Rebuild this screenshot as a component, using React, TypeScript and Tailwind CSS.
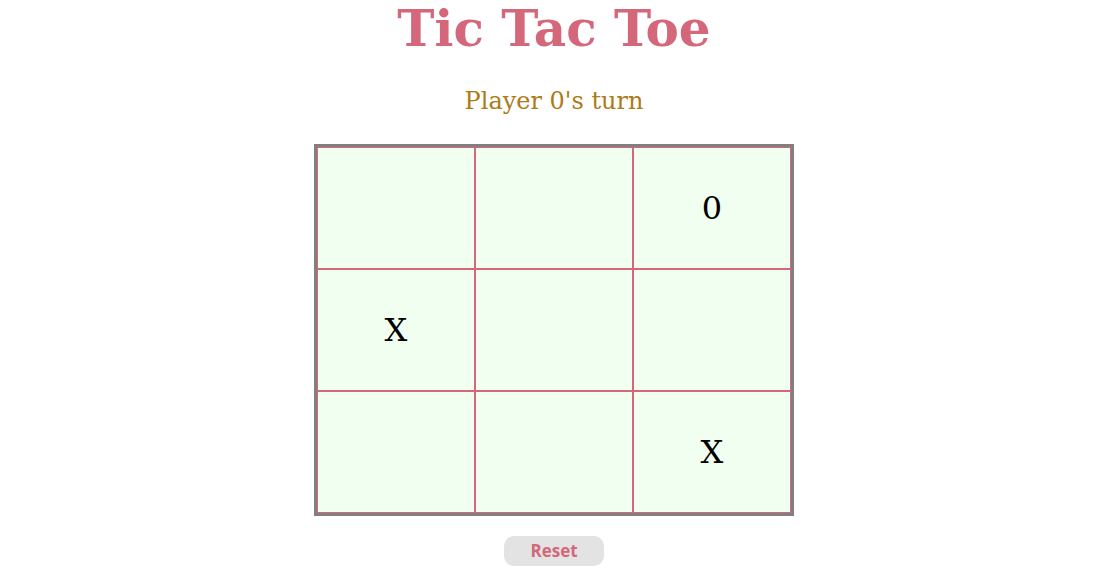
const board = ["", "", "0", "X", "", "", "", "", "X"];

export default function App() {
  return (
    <div className="flex min-h-screen flex-col items-center bg-white pl-[4px]" style={{ fontFamily: '"DejaVu Serif", serif' }}>
      <h1 className="text-[50px] font-bold leading-[58px] text-[#d4677a]">Tic Tac Toe</h1>
      <p className="mt-[29px] text-[24px] leading-[28px] text-[#ad7b16]">Player 0's turn</p>

      <div className="mt-[29px] border-[3px] border-[#808080]">
        <div className="grid grid-cols-3">
          {board.map((v, i) => (
            <div
              key={i}
              className="flex h-[122px] w-[158px] items-center justify-center border border-[#d4677a] bg-[#f0fff0] text-[32px] text-black"
            >
              {v}
            </div>
          ))}
        </div>
      </div>

      <button
        className="mt-[20px] h-[30px] w-[100px] rounded-[10px] bg-[#e3e3e3] text-[17px] font-bold text-[#d4677a]"
        style={{ fontFamily: '"Open Sans", sans-serif' }}
      >
        Reset
      </button>
    </div>
  );
}
